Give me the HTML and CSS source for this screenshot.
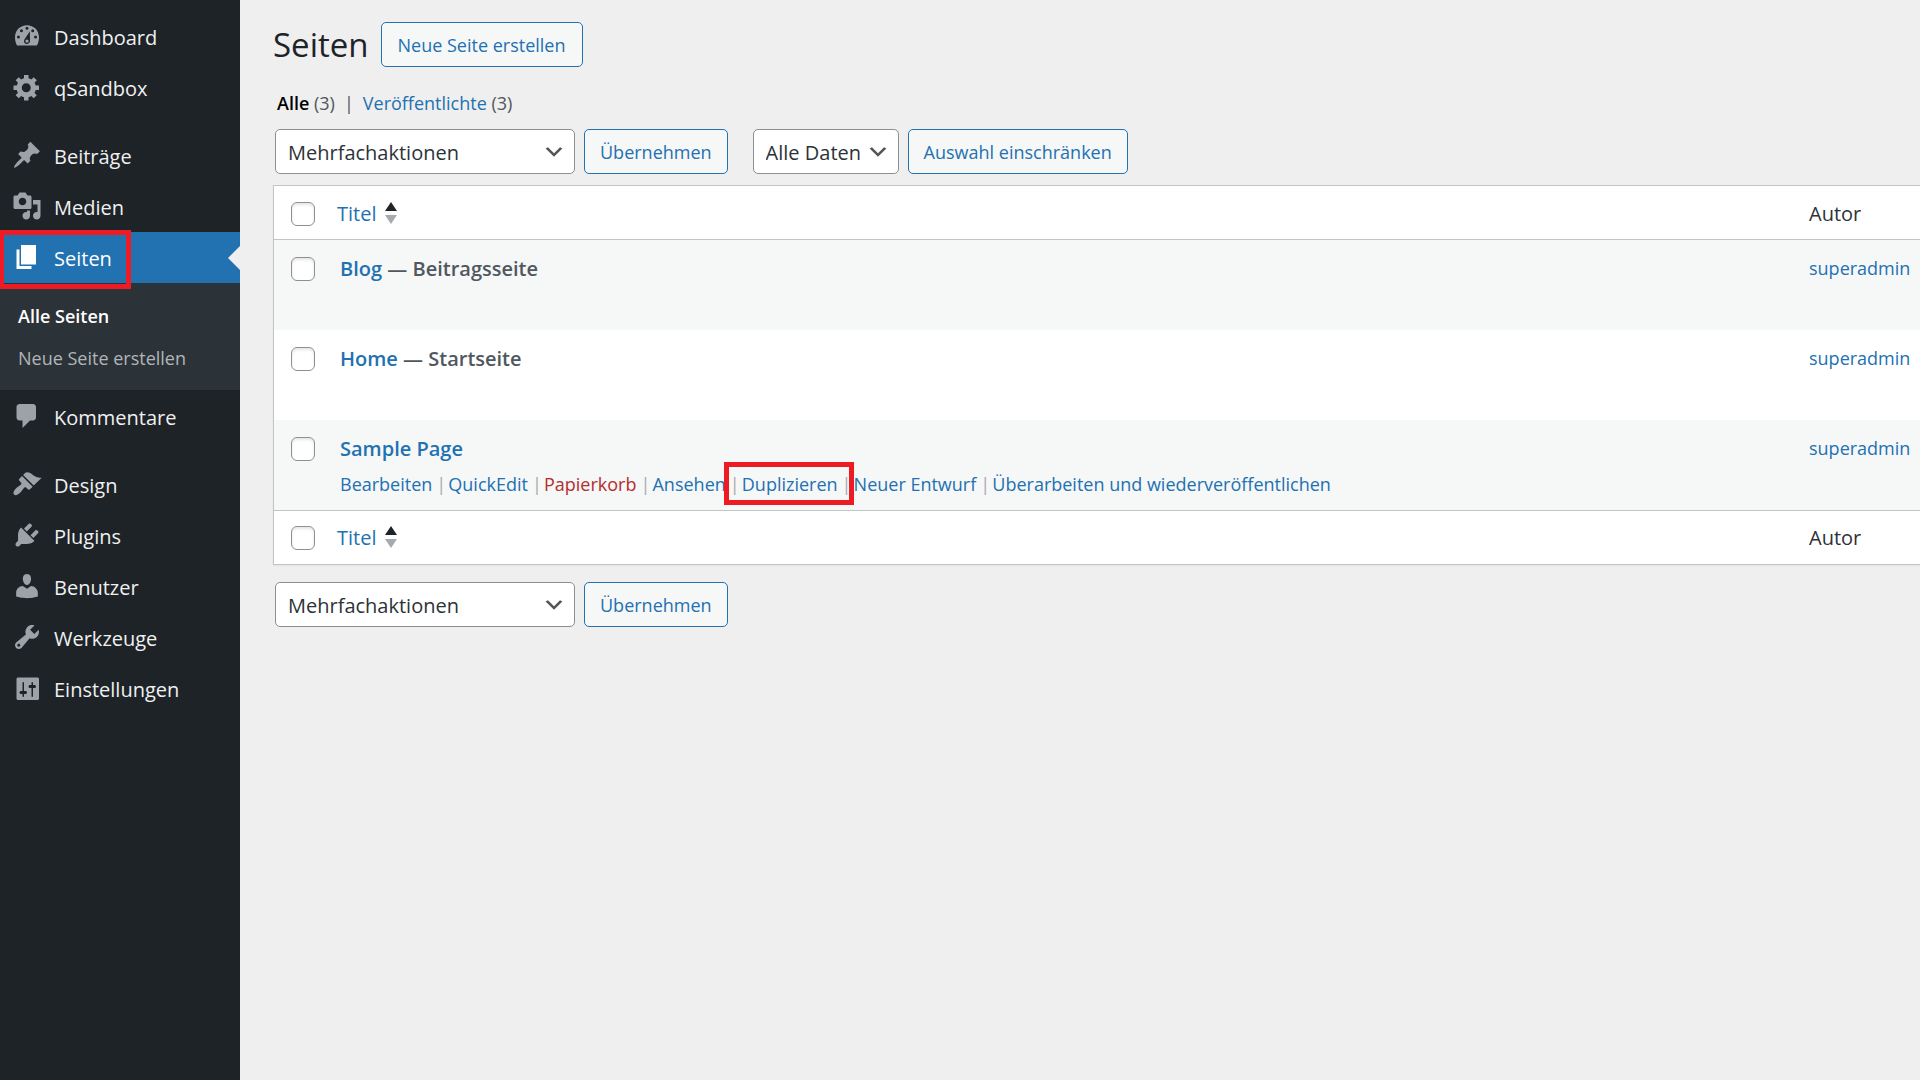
FILE: index.html
```html
<!DOCTYPE html>
<html lang="de">
<head>
<meta charset="utf-8">
<meta name="viewport" content="width=device-width, initial-scale=1">
<title>Seiten</title>
<link rel="stylesheet" href="styles.css">
</head>
<body>
<div class="layout">
  <nav class="sidebar">
    <ul class="menu">
      <li><a class="menu-link" href="#"><svg class="icon" viewBox="0 0 20 20"><path fill-rule="evenodd" transform="translate(0 -.7)" d="M3.400 17C2.500 15.700 2 13.600 2 11.500 2 6.800 5.600 3.500 10 3.500s8 3.300 8 8c0 2.100-.5 4.200-1.400 5.500zM10 4.500a1 1 0 1 0 0 2 1 1 0 0 0 0-2zM6.300 6.200a1 1 0 1 0 0 2 1 1 0 0 0 0-2zm7.500 0a1 1 0 1 0 0 2 1 1 0 0 0 0-2zM4.300 10.300a1 1 0 1 0 0 2 1 1 0 0 0 0-2zm11.400 0a1 1 0 1 0 0 2 1 1 0 0 0 0-2zM11.900 7.500L8.400 12.800c-.9 1.500 0 3.200 1.600 3.200 1.300 0 2.200-1 2-2.400zM10 13a1.100 1.100 0 1 1 0 2.200 1.100 1.100 0 0 1 0-2.200z"/></svg><span>Dashboard</span></a></li>
      <li><a class="menu-link" href="#"><svg class="icon" viewBox="0 0 20 20"><path d="M18 12h-2.180c-.17.7-.44 1.350-.81 1.930l1.540 1.540-2.100 2.100-1.540-1.540c-.58.36-1.230.63-1.910.79V19H8v-2.180c-.68-.16-1.330-.43-1.910-.79l-1.540 1.540-2.120-2.120 1.540-1.540c-.36-.58-.63-1.230-.79-1.910H1V9.030h2.170c.16-.7.44-1.350.8-1.940L2.430 5.550l2.100-2.100 1.540 1.540c.58-.37 1.240-.64 1.930-.81V2h3v2.180c.68.16 1.330.43 1.910.79l1.540-1.540 2.120 2.120-1.540 1.540c.36.59.64 1.240.8 1.940H18V12zm-8.500 1.500c1.660 0 3-1.340 3-3s-1.340-3-3-3-3 1.340-3 3 1.340 3 3 3z"/></svg><span>qSandbox</span></a></li>
      <li class="group"><a class="menu-link" href="#"><svg class="icon" viewBox="0 0 20 20"><path d="M10.440 3.020l1.820-1.820 6.360 6.350-1.830 1.820c-1.050-.68-2.480-.57-3.410.36l-.75.75c-.92.93-1.040 2.350-.35 3.410l-1.830 1.820-2.410-2.410-2.800 2.790c-.42.42-3.380 2.710-3.800 2.290s1.860-3.390 2.280-3.810l2.790-2.790L4.100 9.360l1.830-1.820c1.050.69 2.480.57 3.400-.36l.75-.75c.93-.92 1.050-2.350.36-3.410z"/></svg><span>Beiträge</span></a></li>
      <li><a class="menu-link" href="#"><svg class="icon" viewBox="0 0 20 20"><path fill-rule="evenodd" d="M13 11V4c0-.55-.45-1-1-1h-1.670L9 1H5L3.670 3H2c-.55 0-1 .45-1 1v7c0 .55.45 1 1 1h10c.55 0 1-.45 1-1zM7 4.500c1.380 0 2.500 1.120 2.500 2.500S8.380 9.500 7 9.500 4.500 8.380 4.500 7 5.620 4.500 7 4.500zM14 6h5v10.500c0 1.380-1.120 2.500-2.500 2.500S14 17.880 14 16.500s1.120-2.500 2.500-2.500c.17 0 .34.02.5.05V9h-3V6zm-4 8.050V13h2v3.500c0 1.380-1.120 2.500-2.500 2.500S7 17.880 7 16.500 8.120 14 9.500 14c.17 0 .34.02.5.05z"/></svg><span>Medien</span></a></li>
      <li class="current">
        <a class="menu-link menu-link-current" href="#"><svg class="icon" viewBox="0 0 20 20"><path d="M6 15V2h10v13H6zm-1 1h8v2H3V5h2v11z"/></svg><span>Seiten</span></a>
        <span class="marker marker-menu"></span>
        <ul class="submenu">
          <li><a class="submenu-link submenu-link-current" href="#">Alle Seiten</a></li>
          <li><a class="submenu-link" href="#">Neue Seite erstellen</a></li>
        </ul>
      </li>
      <li><a class="menu-link" href="#"><svg class="icon" viewBox="0 0 20 20"><path d="M5 2h9c1.100 0 2 .9 2 2v7c0 1.100-.9 2-2 2h-2l-5 5v-5H5c-1.100 0-2-.9-2-2V4c0-1.100.9-2 2-2z"/></svg><span>Kommentare</span></a></li>
      <li class="group"><a class="menu-link" href="#"><svg class="icon" viewBox="0 0 20 20"><path d="M14.480 11.060L7.410 3.990l1.500-1.500c.5-.56 2.300-.47 3.510.32 1.210.8 1.430 1.280 2.910 2.100 1.180.64 2.450 1.260 4.450.85zm-.71.71L6.700 4.700 4.930 6.470c-.39.39-.39 1.020 0 1.410l1.060 1.060c.39.39.39 1.030 0 1.420-.6.6-1.430 1.110-2.210 1.690-.35.26-.7.53-1.010.84C1.430 14.230.4 16.080 1.400 17.070c.99 1 2.840-.03 4.180-1.360.31-.31.58-.66.85-1.020.57-.78 1.080-1.610 1.690-2.210.39-.39 1.020-.39 1.410 0l1.060 1.060c.39.39 1.020.39 1.410 0z"/></svg><span>Design</span></a></li>
      <li><a class="menu-link" href="#"><svg class="icon" viewBox="0 0 20 20"><path d="M13.110 4.360L9.870 7.600 8 5.730l3.240-3.240c.35-.34 1.050-.2 1.560.32.52.51.66 1.210.31 1.550zm-8 1.770l.91-1.120 9.010 9.010-1.190.84c-.71.71-2.630 1.160-3.820 1.160H6.140L4.900 17.260c-.59.59-1.540.59-2.120 0-.59-.58-.59-1.530 0-2.120l1.240-1.240v-3.880c0-1.130.4-3.190 1.090-3.890zm7.260 3.970l3.240-3.240c.34-.35 1.040-.21 1.550.31.52.51.66 1.210.31 1.550l-3.240 3.250z"/></svg><span>Plugins</span></a></li>
      <li><a class="menu-link" href="#"><svg class="icon" viewBox="0 0 20 20"><path d="M10 9.250c-2.270 0-2.730-3.440-2.730-3.440C7 4.020 7.820 2 9.970 2c2.160 0 2.980 2.020 2.710 3.810 0 0-.41 3.440-2.680 3.440zm0 2.570L12.720 10c2.390 0 4.520 2.330 4.520 4.530v2.490s-3.650 1.130-7.240 1.130c-3.650 0-7.240-1.130-7.240-1.130v-2.490c0-2.250 1.940-4.480 4.470-4.480z"/></svg><span>Benutzer</span></a></li>
      <li><a class="menu-link" href="#"><svg class="icon" viewBox="0 0 20 20"><path fill-rule="evenodd" d="M16.680 9.770c-1.340 1.340-3.300 1.670-4.950.99l-5.410 6.520c-.99.99-2.590.99-3.580 0s-.99-2.590 0-3.570l6.520-5.420c-.68-1.650-.35-3.610.99-4.950 1.280-1.280 3.120-1.620 4.720-1.060l-2.890 2.890 2.820 2.820 2.860-2.870c.53 1.580.18 3.390-1.080 4.650zM3.810 16.210c.4.39 1.040.39 1.430 0 .4-.4.4-1.040 0-1.430-.39-.4-1.030-.4-1.430 0-.39.39-.39 1.030 0 1.430z"/></svg><span>Werkzeuge</span></a></li>
      <li><a class="menu-link" href="#"><svg class="icon" viewBox="0 0 20 20"><path fill-rule="evenodd" transform="translate(0 1)" d="M18 16V3c0-.55-.45-1-1-1H4c-.55 0-1 .45-1 1v13c0 .55.45 1 1 1h13c.55 0 1-.45 1-1zM8 11h1c.55 0 1 .45 1 1s-.45 1-1 1H8v1.500c0 .28-.22.5-.5.5s-.5-.22-.5-.5V13H6c-.55 0-1-.45-1-1s.45-1 1-1h1V5.500c0-.28.22-.5.5-.5s.5.22.5.5V11zm5-2h-1c-.55 0-1-.45-1-1s.45-1 1-1h1V5.500c0-.28.22-.5.5-.5s.5.22.5.5V7h1c.55 0 1 .45 1 1s-.45 1-1 1h-1v5.500c0 .28-.22.5-.5.5s-.5-.22-.5-.5V9z"/></svg><span>Einstellungen</span></a></li>
    </ul>
  </nav>

  <main class="content">
    <header class="page-header">
      <h1 class="page-title">Seiten</h1>
      <button class="button button-title" type="button">Neue Seite erstellen</button>
    </header>

    <div class="views">
      <span><a class="view-current" href="#">Alle</a> (3)</span>
      <span>|</span>
      <span><a href="#">Veröffentlichte</a> (3)</span>
    </div>

    <div class="toolbar">
      <div class="toolbar-group">
        <span class="select select-bulk">
          <select class="select-field" aria-label="Mehrfachaktion auswählen"><option>Mehrfachaktionen</option></select>
          <svg class="select-arrow" viewBox="0 0 20 20"><path d="M5 6l5 5 5-5 2 1-7 7-7-7 2-1z"/></svg>
        </span>
        <button class="button" type="button">Übernehmen</button>
      </div>
      <div class="toolbar-group">
        <span class="select select-date">
          <select class="select-field" aria-label="Nach Datum filtern"><option>Alle Daten</option></select>
          <svg class="select-arrow" viewBox="0 0 20 20"><path d="M5 6l5 5 5-5 2 1-7 7-7-7 2-1z"/></svg>
        </span>
        <button class="button" type="button">Auswahl einschränken</button>
      </div>
    </div>

    <table class="pages">
      <thead>
        <tr>
          <td class="check"><input class="checkbox" type="checkbox" aria-label="Alle auswählen"></td>
          <th scope="col"><a class="sort" href="#">Titel <svg class="sort-icon" viewBox="0 0 12 22"><path class="sort-up" d="M6 0l6 9H0z"/><path class="sort-down" d="M0 13h12l-6 9z"/></svg></a></th>
          <th class="author" scope="col">Autor</th>
        </tr>
      </thead>
      <tbody>
        <tr>
          <td class="check"><input class="checkbox" type="checkbox" aria-label="Blog auswählen"></td>
          <td><strong class="row-title"><a href="#">Blog</a> — Beitragsseite</strong></td>
          <td class="author"><a href="#">superadmin</a></td>
        </tr>
        <tr>
          <td class="check"><input class="checkbox" type="checkbox" aria-label="Home auswählen"></td>
          <td><strong class="row-title"><a href="#">Home</a> — Startseite</strong></td>
          <td class="author"><a href="#">superadmin</a></td>
        </tr>
        <tr>
          <td class="check"><input class="checkbox" type="checkbox" aria-label="Sample Page auswählen"></td>
          <td>
            <strong class="row-title"><a href="#">Sample Page</a></strong>
            <div class="row-actions">
              <a href="#">Bearbeiten</a><span class="divider">|</span><a href="#">QuickEdit</a><span class="divider">|</span><a class="trash" href="#">Papierkorb</a><span class="divider">|</span><a href="#">Ansehen</a><span class="divider">|</span><span class="action-marked"><a href="#">Duplizieren</a><span class="marker marker-action"></span></span><span class="divider">|</span><a href="#">Neuer Entwurf</a><span class="divider">|</span><a href="#">Überarbeiten und wiederveröffentlichen</a>
            </div>
          </td>
          <td class="author"><a href="#">superadmin</a></td>
        </tr>
      </tbody>
      <tfoot>
        <tr>
          <td class="check"><input class="checkbox" type="checkbox" aria-label="Alle auswählen"></td>
          <th scope="col"><a class="sort" href="#">Titel <svg class="sort-icon" viewBox="0 0 12 22"><path class="sort-up" d="M6 0l6 9H0z"/><path class="sort-down" d="M0 13h12l-6 9z"/></svg></a></th>
          <th class="author" scope="col">Autor</th>
        </tr>
      </tfoot>
    </table>

    <div class="toolbar toolbar-bottom">
      <div class="toolbar-group">
        <span class="select select-bulk">
          <select class="select-field" aria-label="Mehrfachaktion auswählen"><option>Mehrfachaktionen</option></select>
          <svg class="select-arrow" viewBox="0 0 20 20"><path d="M5 6l5 5 5-5 2 1-7 7-7-7 2-1z"/></svg>
        </span>
        <button class="button" type="button">Übernehmen</button>
      </div>
    </div>
  </main>
</div>
</body>
</html>
```
FILE: styles.css
```css
* {
  box-sizing: border-box;
}

body {
  margin: 0;
  background: #efefef;
  color: #3c434a;
  font-family: "Open Sans", "Noto Sans", sans-serif;
  font-size: 18px;
  line-height: 28px;
}

a {
  color: #2271b1;
  text-decoration: none;
}

ul {
  list-style: none;
  margin: 0;
  padding: 0;
}

.layout {
  display: flex;
  min-height: 100vh;
}

/* Sidebar */

.sidebar {
  flex: 0 0 240px;
  padding-top: 11px;
  background: #1d2327;
}

.group {
  margin-top: 17px;
}

.menu-link {
  display: flex;
  align-items: flex-start;
  gap: 12px;
  height: 51px;
  padding-left: 12px;
  color: #f0f0f1;
  font-size: 20px;
  line-height: 53px;
}

.icon {
  flex: none;
  width: 30px;
  height: 30px;
  margin-top: 10px;
  fill: #9ca2a7;
}

.current {
  position: relative;
  margin-bottom: 1px;
}

.menu-link-current {
  background: #2271b1;
  color: #fff;
}

.menu-link-current .icon {
  fill: #fff;
}

.menu-link-current::after {
  content: "";
  align-self: center;
  margin-left: auto;
  border: 12px solid transparent;
  border-left-width: 0;
  border-right-color: #efefef;
}

.submenu {
  padding: 12px 0 11px;
  background: #2c3338;
}

.submenu-link {
  display: block;
  padding: 7px 18px;
  color: #b0b5b9;
}

.submenu-link-current {
  color: #fff;
  font-weight: 600;
}

.marker {
  position: absolute;
  border: 5px solid #ed1c24;
  pointer-events: none;
}

.marker-menu {
  top: -2px;
  left: 0;
  width: 131px;
  height: 59px;
  border-left-width: 4px;
}

/* Content */

.content {
  flex: 1;
  min-width: 0;
  padding: 22px 0 0 33px;
}

.page-header {
  display: flex;
  align-items: center;
  gap: 12px;
}

.page-title {
  margin: 0;
  color: #1d2327;
  font-size: 33px;
  font-weight: 400;
  line-height: 45px;
}

.button {
  height: 45px;
  padding: 0 15px;
  border: 1px solid #2271b1;
  border-radius: 5px;
  background: #f6f7f7;
  color: #2271b1;
  font: inherit;
}

.button-title {
  padding: 0 16px;
}

.views {
  display: flex;
  gap: 9px;
  padding: 22px 4px 12px;
  color: #50575e;
}

.view-current {
  color: #000;
  font-weight: 600;
}

.toolbar {
  display: flex;
  gap: 25px;
  padding: 0 2px 11px;
}

.toolbar-bottom {
  padding-top: 17px;
}

.toolbar-group {
  display: flex;
  gap: 9px;
}

.select {
  display: grid;
  align-items: center;
}

.select-bulk {
  width: 300px;
}

.select-date {
  width: 146px;
}

.select-field,
.select-arrow {
  grid-area: 1 / 1;
}

.select-field {
  appearance: none;
  width: 100%;
  height: 45px;
  padding: 1px 12px 0;
  border: 1px solid #8c8f94;
  border-radius: 5px;
  background: #fff;
  color: #2c3338;
  font-family: inherit;
  font-size: 20px;
}

.select-arrow {
  justify-self: end;
  width: 24px;
  height: 24px;
  margin-right: 9px;
  fill: #555;
  pointer-events: none;
}

/* Table */

.pages {
  width: 100%;
  border: 1px solid #c3c4c7;
  border-right: 0;
  border-spacing: 0;
  background: #fff;
  box-shadow: 0 1px 2px rgba(0, 0, 0, 0.05);
}

.pages th,
.pages td {
  padding: 0;
  text-align: left;
  vertical-align: top;
}

.pages th,
.pages thead td,
.pages tfoot td {
  height: 54px;
  padding-top: 2px;
  font-size: 20px;
  font-weight: 400;
  vertical-align: middle;
}

.pages thead th,
.pages thead td {
  border-bottom: 1px solid #c3c4c7;
}

.pages tfoot th,
.pages tfoot td {
  border-top: 1px solid #c3c4c7;
}

.pages tfoot th,
.pages tfoot td {
  padding-top: 0;
}

.pages th {
  color: #2c3338;
}

.pages tbody td {
  height: 90px;
  padding-top: 14px;
}

.pages tbody tr:nth-child(odd) {
  background: #f6f7f7;
}

.pages .check {
  width: 63px;
  padding-left: 17px;
  line-height: 0;
}

.pages tbody .check {
  padding-top: 17px;
}

.pages tbody td:nth-child(2) {
  padding-left: 3px;
}

.pages .author {
  width: 111px;
}

.checkbox {
  appearance: none;
  width: 24px;
  height: 24px;
  margin: 0;
  border: 1px solid #8c8f94;
  border-radius: 6px;
  background: #fff;
  box-shadow: inset 0 2px 3px rgba(0, 0, 0, 0.1);
}

.sort {
  display: flex;
  align-items: center;
  gap: 9px;
}

.sort-icon {
  width: 12px;
  height: 22px;
  margin-bottom: 2px;
}

.sort-up {
  fill: #1d2327;
}

.sort-down {
  fill: #a7aaad;
}

.row-title {
  display: block;
  color: #50575e;
  font-size: 20px;
  font-weight: 600;
  line-height: 30px;
}

.row-actions {
  display: flex;
  gap: 4px;
  padding-top: 6px;
  white-space: nowrap;
}

.divider {
  width: 8px;
  color: #a7aaad;
  text-align: center;
}

.trash {
  color: #b32d2e;
}

.action-marked {
  position: relative;
}

.marker-action {
  inset: -8px -16px -7px -18px;
}
```
